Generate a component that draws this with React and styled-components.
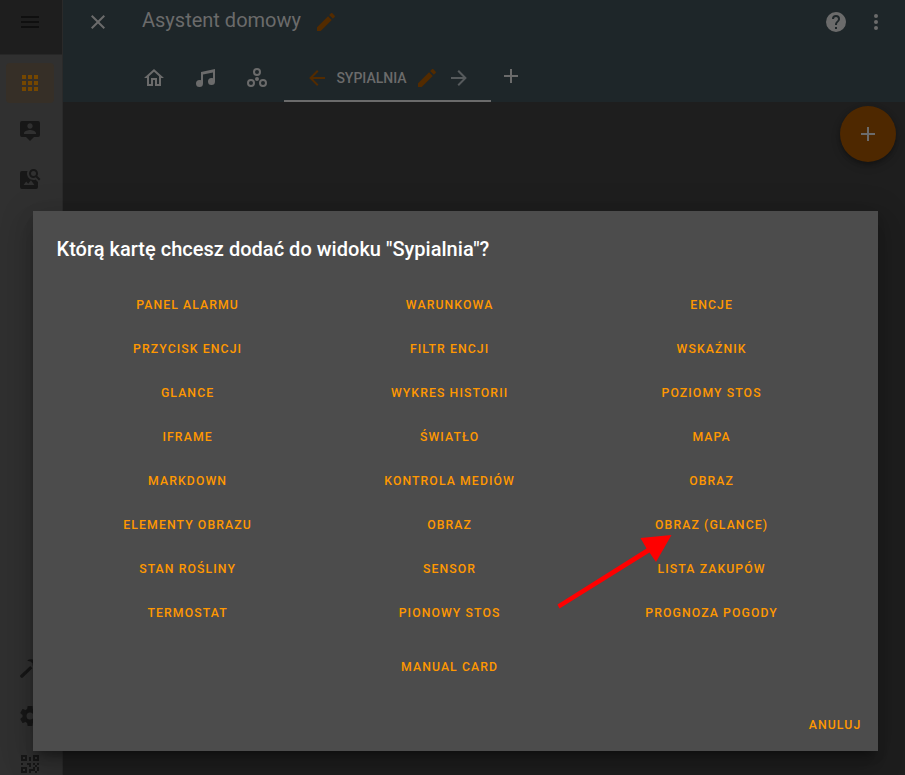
import React from 'react';
import styled, { createGlobalStyle } from 'styled-components';

const Global = createGlobalStyle`
  * { box-sizing: border-box; }
  html, body { margin: 0; padding: 0; overflow: hidden; background: #1e1e1e; }
  body { font-family: Roboto, "Noto Sans", sans-serif; }
  button { font-family: inherit; border: 0; padding: 0; background: none; }
`;

const icons = {
  menu: 'M3,6H21V8H3V6M3,11H21V13H3V11M3,16H21V18H3V16Z',
  close: 'M19,6.41L17.59,5L12,10.59L6.41,5L5,6.41L10.59,12L5,17.59L6.41,19L12,13.41L17.59,19L19,17.59L13.41,12L19,6.41Z',
  apps: 'M16,20H20V16H16M16,14H20V10H16M10,8H14V4H10M16,8H20V4H16M10,14H14V10H10M4,14H8V10H4M4,20H8V16H4M10,20H14V16H10M4,8H8V4H4V8Z',
  account: 'M20,2H4A2,2 0 0,0 2,4V16A2,2 0 0,0 4,18H8L12,22L16,18H20A2,2 0 0,0 22,16V4A2,2 0 0,0 20,2M12,4.3C13.5,4.3 14.7,5.5 14.7,7C14.7,8.5 13.5,9.7 12,9.7C10.5,9.7 9.3,8.5 9.3,7C9.3,5.5 10.5,4.3 12,4.3M18,15H6V14.1C6,12.1 10,11 12,11C14,11 18,12.1 18,14.1V15Z',
  imageSearch: 'M15.5,9A2.5,2.5 0 0,0 18,6.5A2.5,2.5 0 0,0 15.5,4A2.5,2.5 0 0,0 13,6.5A2.5,2.5 0 0,0 15.5,9M19.31,8.91L22.41,12L21,13.41L17.86,10.31C17.08,10.78 16.28,11 15.47,11C14.22,11 13.16,10.58 12.3,9.7C11.45,8.83 11,7.77 11,6.5C11,5.27 11.45,4.2 12.33,3.33C13.2,2.45 14.27,2 15.5,2C16.77,2 17.83,2.45 18.7,3.33C19.58,4.2 20,5.27 20,6.5C20,7.33 19.78,8.13 19.31,8.91M16.5,18H5.5L8.25,14.5L10.22,16.83L12.94,13.31L16.5,18M18,13L20,15V20A2,2 0 0,1 18,22H4A2,2 0 0,1 2,20V6A2,2 0 0,1 4,4H9.5C9.2,4.8 9,5.6 9,6.5C9,10.1 11.9,13 15.5,13C16.4,13 17.2,12.9 18,12.5V13Z',
  hammer: 'M2.4,19.3L12.3,10.1L14.4,12.2L4.8,21.5C4.2,22.1 3.5,22 3,21.5L2.3,20.8C1.9,20.3 1.9,19.7 2.4,19.3M9.5,4.2C11.5,2.8 14.6,2.8 16.3,4.2L20,7.9L18.5,9.4H21.3L22,10L18.5,13.4L14.6,9.6V7.6L12.5,5.4L9.5,4.8Z',
  cog: 'M12,15.5A3.5,3.5 0 0,1 8.5,12A3.5,3.5 0 0,1 12,8.5A3.5,3.5 0 0,1 15.5,12A3.5,3.5 0 0,1 12,15.5M19.43,12.97C19.47,12.65 19.5,12.33 19.5,12C19.5,11.67 19.47,11.34 19.43,11L21.54,9.37C21.73,9.22 21.78,8.95 21.66,8.73L19.66,5.27C19.54,5.05 19.27,4.96 19.05,5.05L16.56,6.05C16.04,5.66 15.5,5.32 14.87,5.07L14.5,2.42C14.46,2.18 14.25,2 14,2H10C9.75,2 9.54,2.18 9.5,2.42L9.13,5.07C8.5,5.32 7.96,5.66 7.44,6.05L4.95,5.05C4.73,4.96 4.46,5.05 4.34,5.27L2.34,8.73C2.21,8.95 2.27,9.22 2.46,9.37L4.57,11C4.53,11.34 4.5,11.67 4.5,12C4.5,12.33 4.53,12.65 4.57,12.97L2.46,14.63C2.27,14.78 2.21,15.05 2.34,15.27L4.34,18.73C4.46,18.95 4.73,19.03 4.95,18.95L7.44,17.94C7.96,18.34 8.5,18.68 9.13,18.93L9.5,21.58C9.54,21.82 9.75,22 10,22H14C14.25,22 14.46,21.82 14.5,21.58L14.87,18.93C15.5,18.67 16.04,18.34 16.56,17.94L19.05,18.95C19.27,19.03 19.54,18.95 19.66,18.73L21.66,15.27C21.78,15.05 21.73,14.78 21.54,14.63L19.43,12.97Z',
  qrcode: 'M3,11H5V13H3V11M11,5H13V9H11V5M9,11H13V15H11V13H9V11M15,11H17V13H19V11H21V13H19V15H21V19H19V21H17V19H13V21H11V17H15V15H17V13H15V11M19,19V15H17V19H19M15,3H21V9H15V3M17,5V7H19V5H17M3,3H9V9H3V3M5,5V7H7V5H5M3,15H9V21H3V15M5,17V19H7V17H5Z',
  home: 'M12 5.69L17 10.19V18H15V12H9V18H7V10.19L12 5.69M12 3L2 12H5V20H11V14H13V20H19V12H22',
  music: 'M21,3V15.5A3.5,3.5 0 0,1 17.5,19A3.5,3.5 0 0,1 14,15.5A3.5,3.5 0 0,1 17.5,12C18.04,12 18.55,12.12 19,12.34V6.47L9,8.6V17.5A3.5,3.5 0 0,1 5.5,21A3.5,3.5 0 0,1 2,17.5A3.5,3.5 0 0,1 5.5,14C6.04,14 6.55,14.12 7,14.34V6L21,3Z',
  circles: 'M12,2A4,4 0 0,1 16,6A4,4 0 0,1 12,10A4,4 0 0,1 8,6A4,4 0 0,1 12,2M12,4A2,2 0 0,0 10,6A2,2 0 0,0 12,8A2,2 0 0,0 14,6A2,2 0 0,0 12,4M6,13A4,4 0 0,1 10,17A4,4 0 0,1 6,21A4,4 0 0,1 2,17A4,4 0 0,1 6,13M6,15A2,2 0 0,0 4,17A2,2 0 0,0 6,19A2,2 0 0,0 8,17A2,2 0 0,0 6,15M18,13A4,4 0 0,1 22,17A4,4 0 0,1 18,21A4,4 0 0,1 14,17A4,4 0 0,1 18,13M18,15A2,2 0 0,0 16,17A2,2 0 0,0 18,19A2,2 0 0,0 20,17A2,2 0 0,0 18,15M12,11A2,2 0 0,1 14,13A2,2 0 0,1 12,15A2,2 0 0,1 10,13A2,2 0 0,1 12,11Z',
  left: 'M20,11V13H8L13.5,18.5L12.08,19.92L4.16,12L12.08,4.08L13.5,5.5L8,11H20Z',
  right: 'M4,11V13H16L10.5,18.5L11.92,19.92L19.84,12L11.92,4.08L10.5,5.5L16,11H4Z',
  pencil: 'M20.71,7.04C21.1,6.65 21.1,6 20.71,5.63L18.37,3.29C18,2.9 17.35,2.9 16.96,3.29L15.12,5.12L18.87,8.87M3,17.25V21H6.75L17.81,9.93L14.06,6.18L3,17.25Z',
  plus: 'M19,13H13V19H11V13H5V11H11V5H13V11H19V13Z',
  help: 'M15.07,11.25L14.17,12.17C13.45,12.89 13,13.5 13,15H11V14.5C11,13.39 11.45,12.39 12.17,11.67L13.41,10.41C13.78,10.05 14,9.55 14,9C14,7.89 13.1,7 12,7A2,2 0 0,0 10,9H8A4,4 0 0,1 12,5A4,4 0 0,1 16,9C16,9.88 15.64,10.67 15.07,11.25M13,19H11V17H13M12,2A10,10 0 0,0 2,12A10,10 0 0,0 12,22A10,10 0 0,0 22,12C22,6.47 17.5,2 12,2Z',
  dots: 'M12,16A2,2 0 0,1 14,18A2,2 0 0,1 12,20A2,2 0 0,1 10,18A2,2 0 0,1 12,16M12,10A2,2 0 0,1 14,12A2,2 0 0,1 12,14A2,2 0 0,1 10,12A2,2 0 0,1 12,10M12,4A2,2 0 0,1 14,6A2,2 0 0,1 12,8A2,2 0 0,1 10,6A2,2 0 0,1 12,4Z',
};

const Svg = styled.svg`
  display: block;
  flex: none;
  width: 24px;
  height: 24px;
  fill: ${(p) => p.$color || 'currentColor'};
`;
const Icon = ({ name, color }) => (
  <Svg viewBox="0 0 24 24" $color={color}><path fillRule="evenodd" d={icons[name]} /></Svg>
);

const accent = '#532b00';
const amber = '#754700';

const Screen = styled.div`
  position: relative;
  display: flex;
  width: 905px;
  height: 775px;
  overflow: hidden;
  background: #1e1e1e;
`;
const Sidebar = styled.aside`
  display: flex;
  flex-direction: column;
  width: 63px;
  border-right: 1px solid #2a2a2a;
  background: #303030;
  color: #171717;
`;
const SidebarHeader = styled.div`
  height: 55px;
  padding: 10px 18px;
  background: #1e1e1e;
  border-bottom: 1px solid #272727;
  color: #0f0f0f;
`;
const SideNav = styled.nav`
  display: flex;
  flex-direction: column;
  gap: 8px;
  padding: 8px 6px 0;
  flex: 1;
`;
const SideItem = styled.a`
  display: flex;
  align-items: center;
  width: 48px;
  height: 40px;
  padding-left: 12px;
  border-radius: 4px;
  background: ${(p) => (p.$active ? '#362f27' : 'transparent')};
`;
const SideSpacer = styled.div`flex: 1;`;
const SideFooter = styled.div`
  display: flex;
  flex-direction: column;
  gap: 8px;
  margin-bottom: -9px;
`;

const Main = styled.main`
  display: flex;
  flex-direction: column;
  align-items: flex-end;
  flex: 1;
`;
const Header = styled.header`
  width: 100%;
  height: 102px;
  background: #1e2629;
  color: #6b6b6b;
`;
const Toolbar = styled.div`
  display: flex;
  align-items: center;
  height: 44px;
  padding: 0 17px 0 23px;
`;
const Title = styled.h1`
  margin: -4px 13px 0 32px;
  font-size: 20px;
  line-height: 24px;
  font-weight: 400;
`;
const ToolbarEnd = styled.div`
  display: flex;
  gap: 16px;
  margin-left: auto;
`;
const Tabs = styled.div`
  display: flex;
  height: 58px;
  padding: 10px 0 0 79px;
`;
const Tab = styled.div`
  display: flex;
  width: 24px;
  height: 48px;
  padding-top: 12px;
  margin-right: ${(p) => p.$gap}px;
`;
const ActiveTab = styled.div`
  display: flex;
  align-items: flex-start;
  width: 207px;
  height: 48px;
  padding: 12px 0 0 21px;
  border-bottom: 2px solid #6b6b6b;
`;
const TabLabel = styled.span`
  width: 72px;
  margin: 0 7px;
  font-size: 14px;
  line-height: 24px;
  font-weight: 500;
  white-space: nowrap;
`;
const TabArrow = styled.span`
  margin-left: 8px;
  color: #565a5c;
`;
const AddTab = styled.div`padding: 10px 0 0 8px;`;
const Fab = styled.button`
  display: flex;
  align-items: center;
  justify-content: center;
  width: 56px;
  height: 56px;
  margin: 4px 9px 0 0;
  border-radius: 50%;
  background: #4e2800;
  color: #6b6b6b;
  box-shadow: 0 2px 4px rgba(0, 0, 0, 0.25), 0 4px 10px rgba(0, 0, 0, 0.18);
`;

const Dialog = styled.section`
  position: absolute;
  left: 33px;
  top: 211px;
  width: 845px;
  height: 540px;
  display: flex;
  flex-direction: column;
  background: #4c4c4c;
  color: #ff9800;
  box-shadow: 0 16px 24px 2px rgba(0, 0, 0, 0.14), 0 6px 30px 5px rgba(0, 0, 0, 0.12), 0 8px 10px -5px rgba(0, 0, 0, 0.4);
`;
const DialogTitle = styled.h2`
  margin: 24px 23.5px 0;
  font-size: 20px;
  line-height: 28px;
  font-weight: 500;
  letter-spacing: 0.02px;
  color: #fff;
`;
const CardGrid = styled.div`
  display: grid;
  grid-template-columns: repeat(3, 262px);
  grid-auto-rows: 36px;
  row-gap: 8px;
  margin: 24px 0 0 23.6px;
`;
const CardButton = styled.button`
  display: flex;
  align-items: center;
  justify-content: center;
  color: inherit;
  font-size: 12.25px;
  line-height: 36px;
  font-weight: 500;
  letter-spacing: 1.09px;
  text-transform: uppercase;
  white-space: nowrap;
`;
const ManualRow = styled.div`
  display: flex;
  justify-content: center;
  width: 786px;
  height: 36px;
  margin: 18px 0 0 23.6px;
`;
const Actions = styled.div`
  display: flex;
  justify-content: flex-end;
  padding-right: 16.7px;
  margin-top: 22px;
`;
const Arrow = styled.svg`
  position: absolute;
  left: 555px;
  top: 530px;
  width: 120px;
  height: 82px;
  fill: #f00;
`;

const cards = [
  'Panel alarmu', 'Warunkowa', 'Encje',
  'Przycisk encji', 'Filtr encji', 'Wskaźnik',
  'Glance', 'Wykres historii', 'Poziomy stos',
  'Iframe', 'Światło', 'Mapa',
  'Markdown', 'Kontrola mediów', 'Obraz',
  'Elementy obrazu', 'Obraz', 'Obraz (Glance)',
  'Stan rośliny', 'Sensor', 'Lista zakupów',
  'Termostat', 'Pionowy stos', 'Prognoza pogody',
];

export default function App() {
  return (
    <Screen lang="pl">
      <Global />
      <Sidebar>
        <SidebarHeader><Icon name="menu" /></SidebarHeader>
        <SideNav>
          <SideItem $active><Icon name="apps" color={amber} /></SideItem>
          <SideItem><Icon name="account" /></SideItem>
          <SideItem><Icon name="imageSearch" /></SideItem>
          <SideSpacer />
          <SideFooter>
            <SideItem><Icon name="hammer" /></SideItem>
            <SideItem><Icon name="cog" /></SideItem>
            <SideItem><Icon name="qrcode" /></SideItem>
          </SideFooter>
        </SideNav>
      </Sidebar>
      <Main>
        <Header>
          <Toolbar>
            <Icon name="close" />
            <Title>Asystent domowy</Title>
            <Icon name="pencil" color={accent} />
            <ToolbarEnd>
              <Icon name="help" />
              <Icon name="dots" />
            </ToolbarEnd>
          </Toolbar>
          <Tabs>
            <Tab $gap={28}><Icon name="home" /></Tab>
            <Tab $gap={27}><Icon name="music" /></Tab>
            <Tab $gap={15.4}><Icon name="circles" /></Tab>
            <ActiveTab>
              <Icon name="left" color={accent} />
              <TabLabel>SYPIALNIA</TabLabel>
              <Icon name="pencil" color={accent} />
              <TabArrow><Icon name="right" /></TabArrow>
            </ActiveTab>
            <AddTab><Icon name="plus" /></AddTab>
          </Tabs>
        </Header>
        <Fab><Icon name="plus" /></Fab>
      </Main>
      <Dialog>
        <DialogTitle>Którą kartę chcesz dodać do widoku "Sypialnia"?</DialogTitle>
        <CardGrid>
          {cards.map((c, i) => <CardButton key={i}>{c}</CardButton>)}
        </CardGrid>
        <ManualRow><CardButton>Manual card</CardButton></ManualRow>
        <Actions><CardButton>Anuluj</CardButton></Actions>
      </Dialog>
      <Arrow viewBox="555 530 120 82">
        <path d="M557.5,604.5L646.5,548.5L640.5,538L671.5,535L656,562L649.5,552.5L559.5,608.5Z" />
      </Arrow>
    </Screen>
  );
}
